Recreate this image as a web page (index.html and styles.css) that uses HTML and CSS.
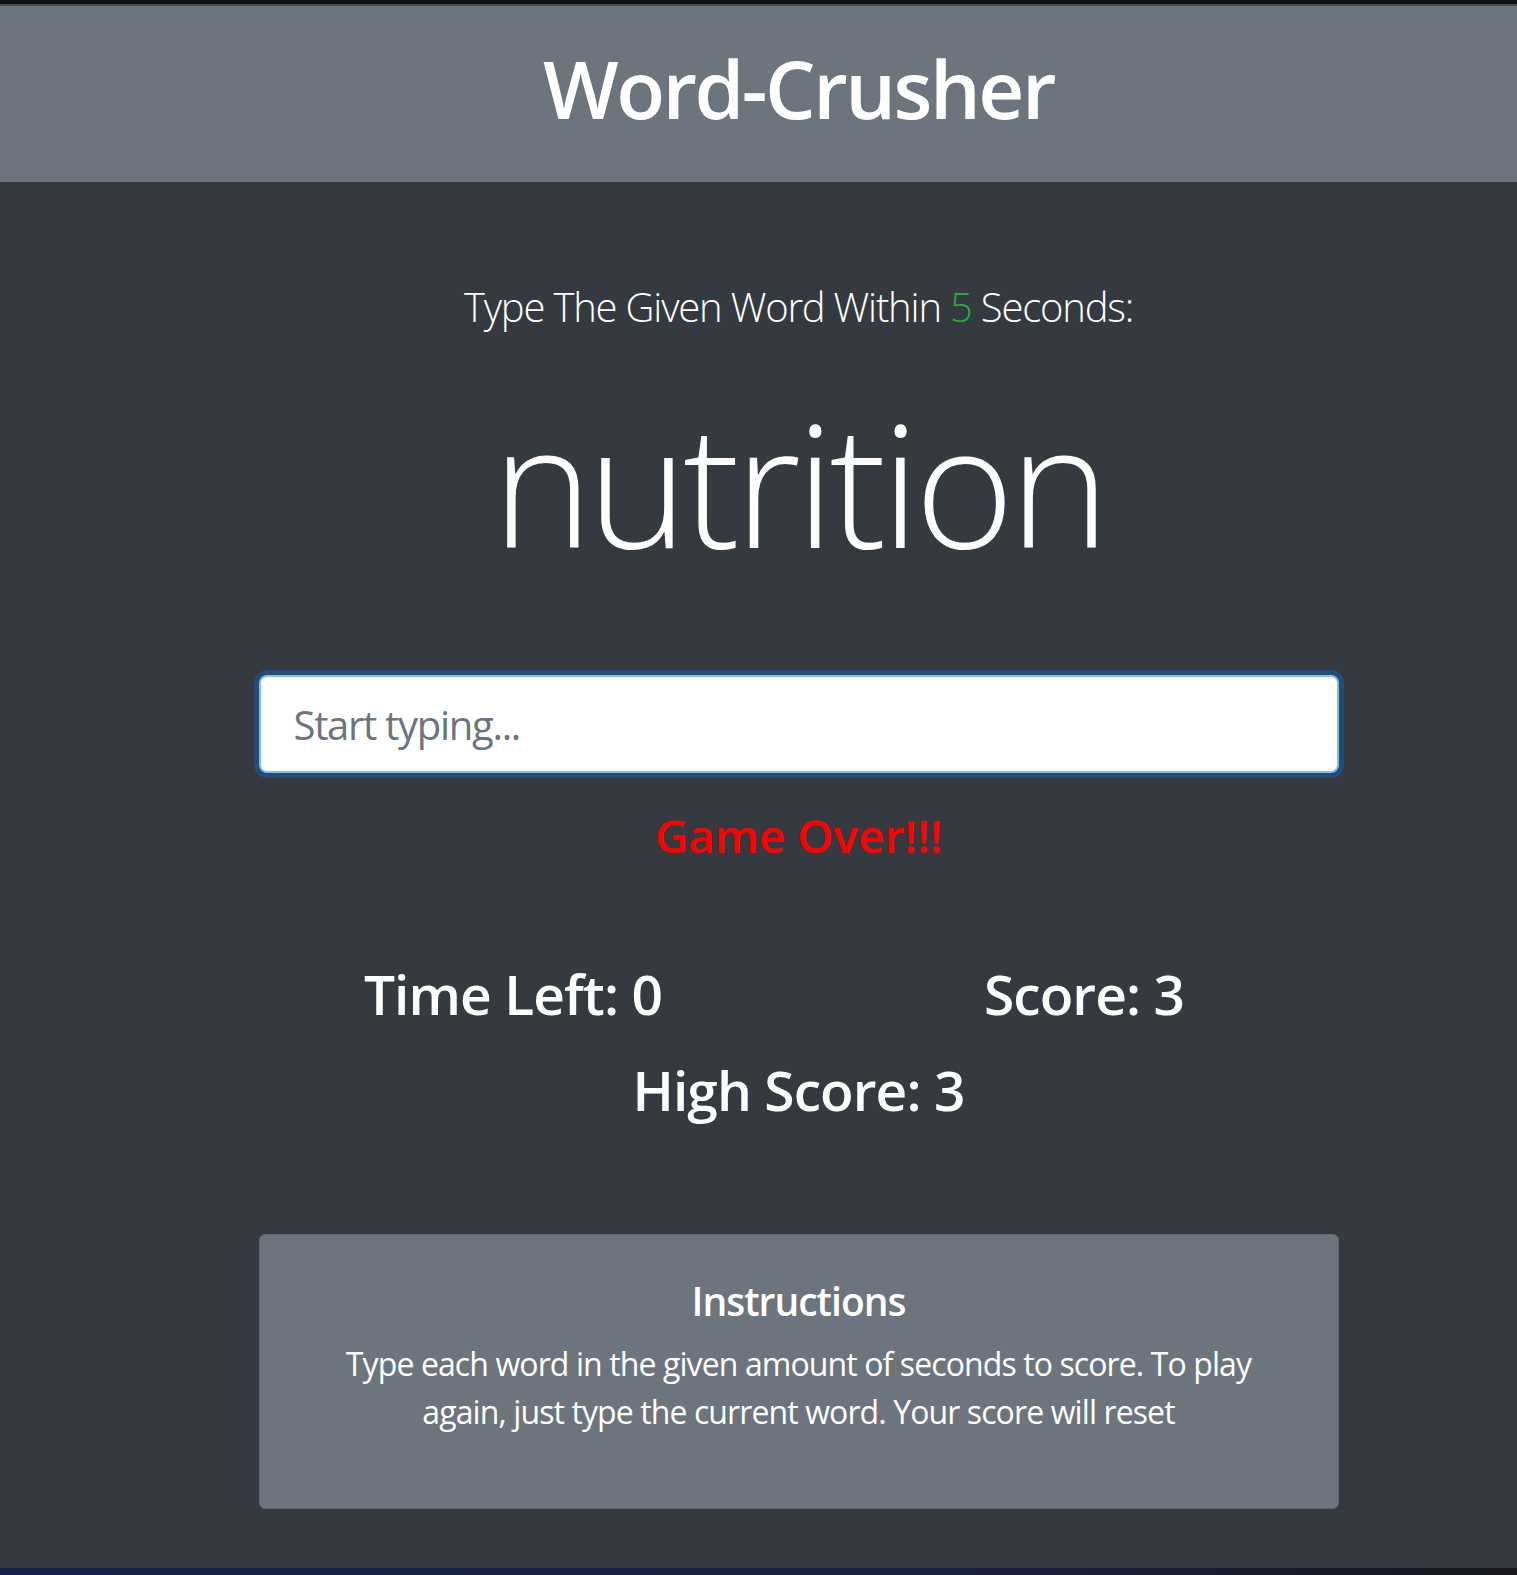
FILE: index.html
```html
<!DOCTYPE html>
<html lang="en">
<head>
<meta charset="utf-8">
<title>Word-Crusher</title>
<link rel="stylesheet" href="styles.css">
</head>
<body>
<div class="topstrip"></div>
<header class="site-header">
  <div class="shell">
    <h1 class="title">Word-Crusher</h1>
  </div>
</header>
<main class="shell">
  <div class="container">
    <p class="lead">Type The Given Word Within <span class="seconds">5</span> Seconds:</p>
    <h2 class="word">nutrition</h2>
    <input class="word-input" type="text" placeholder="Start typing...">
    <h4 class="message">Game Over!!!</h4>
    <div class="stats">
      <h3 class="stat">Time Left: <span>0</span></h3>
      <h3 class="stat">Score: <span>3</span></h3>
      <h3 class="stat stat-wide">High Score: <span>3</span></h3>
    </div>
    <section class="instructions">
      <h5 class="instructions-title">Instructions</h5>
      <p class="instructions-text">Type each word in the given amount of seconds to score. To play again, just type the current word. Your score will reset</p>
    </section>
  </div>
</main>
<div class="bottomstrip"></div>
</body>
</html>
```

FILE: styles.css
```css
* { box-sizing: border-box; }

html, body {
  margin: 0;
  padding: 0;
}

body {
  background: #343a40;
  color: #fff;
  font-family: "Open Sans", "Noto Sans", "Liberation Sans", sans-serif;
}

.topstrip {
  height: 4px;
  background: #111214;
}

.shell {
  padding-left: 80px;
}

.site-header {
  background: #6c757d;
  border-top: 2px solid #474c52;
  padding: 34px 0 46px;
}

.title {
  margin: 0;
  text-align: center;
  font-size: 80px;
  line-height: 96px;
  font-weight: 600;
  letter-spacing: -2.5px;
}

.container {
  width: 1080px;
  margin: 0 auto;
  text-align: center;
}

.lead {
  margin: 95px 0 0;
  font-size: 40px;
  line-height: 60px;
  font-weight: 300;
  letter-spacing: -1.2px;
}

.seconds {
  color: #28a745;
}

.word {
  margin: 43px 0 0;
  font-size: 170px;
  line-height: 204px;
  font-weight: 300;
  letter-spacing: -5px;
}

.word-input {
  display: block;
  width: 1080px;
  height: 98px;
  margin: 91px 0 0;
  padding: 0 33px;
  font-family: inherit;
  font-size: 40px;
  letter-spacing: -1.3px;
  color: #495057;
  background: #fff;
  border: 2px solid #80bdff;
  border-radius: 8px;
  box-shadow: 0 0 0 5px rgba(0, 123, 255, 0.25);
  outline: none;
}

.word-input::placeholder {
  color: #6c757d;
}

.message {
  margin: 32px 0 0;
  font-size: 46px;
  line-height: 60px;
  font-weight: 600;
  color: #ff0000;
}

.stats {
  display: grid;
  grid-template-columns: 1fr 1fr;
  row-gap: 30px;
  margin: 96px -31px 0;
}

.stat {
  margin: 0;
  font-size: 55px;
  line-height: 66px;
  font-weight: 600;
  letter-spacing: -0.9px;
}

.stat-wide {
  grid-column: 1 / span 2;
}

.instructions {
  margin-top: 111px;
  background: #6c757d;
  border: 1px solid #5f666d;
  border-radius: 6px;
  padding: 42px 70px 72px;
}

.instructions-title {
  margin: 0;
  font-size: 39px;
  line-height: 47px;
  font-weight: 600;
  letter-spacing: -1px;
}

.instructions-text {
  margin: 16px 0 0;
  font-size: 32px;
  line-height: 48px;
  letter-spacing: -0.9px;
}

.bottomstrip {
  margin-top: 59px;
  height: 7px;
  background: linear-gradient(90deg, #14204a, #1a2140 60%, #15171c);
}
```
